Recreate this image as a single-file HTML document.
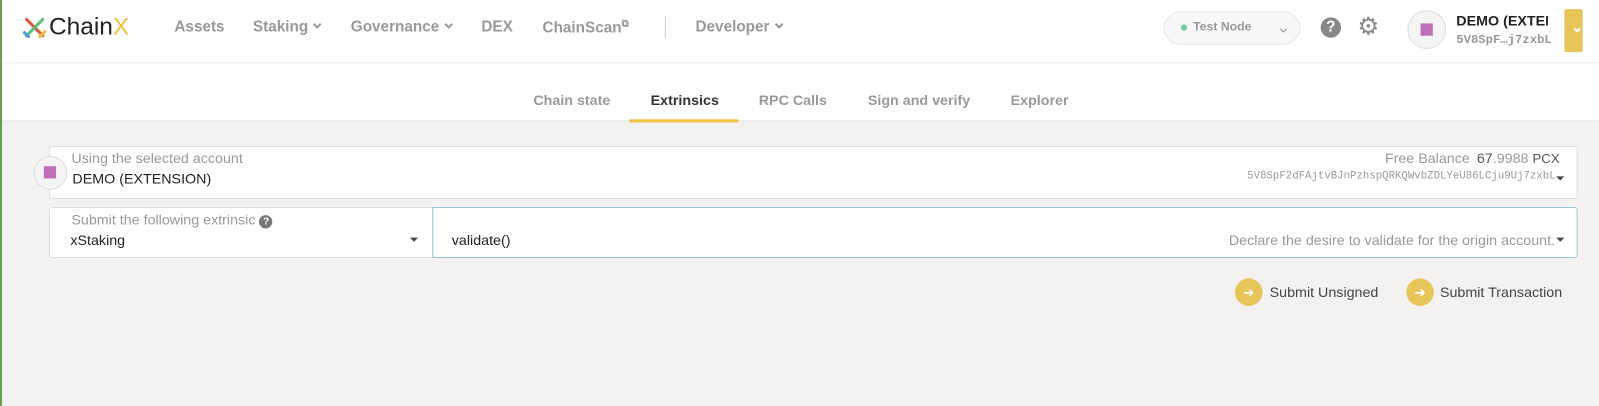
<!DOCTYPE html>
<html><head><meta charset="utf-8"><style>
*{box-sizing:border-box;margin:0;padding:0}
html,body{width:1599px;height:406px;overflow:hidden;background:#f3f2f0}
body{font-family:"Liberation Sans",sans-serif}
#w{position:absolute;left:0;top:0;width:1568px;height:398px;transform:scale(1.0198);transform-origin:0 0}
.a{position:absolute}
.nav{color:#999;font-weight:bold;font-size:15px;top:18px}
.tab{color:#999;font-weight:bold;font-size:14px;top:90px}
.chev{display:inline-block;width:6px;height:6px;border-right:2px solid #999;border-bottom:2px solid #999;transform:rotate(45deg);margin-left:6px;position:relative;top:-4px}
.caret{width:0;height:0;border-left:4px solid transparent;border-right:4px solid transparent;border-top:4px solid #444}
</style></head><body><div id="w">
<div class="a" style="left:0;top:0;width:2px;height:398px;background:#6a9f4a"></div>
<div class="a" style="left:2px;top:0;width:1566px;height:118px;background:#fff"></div>
<div class="a" style="left:2px;top:61px;width:1566px;height:1px;background:#eee"></div>
<div class="a" style="left:2px;top:118px;width:1566px;height:1px;background:#e4e4e4"></div>
<svg class="a" style="left:22px;top:16px" width="24" height="23" viewBox="0 0 24 23">
<path d="M4 3 L12 11 L20 19" stroke="#e05a3a" stroke-width="3" fill="none" stroke-linecap="round"/>
<path d="M20 3 L12 11 L4 19" stroke="#5fbf7a" stroke-width="3" fill="none" stroke-linecap="round"/>
<path d="M2 16 L6 20" stroke="#4a9ee0" stroke-width="3" stroke-linecap="round"/>
<path d="M17 20 L22 15" stroke="#f0c040" stroke-width="3" stroke-linecap="round"/>
</svg>
<div class="a" style="left:48px;top:13px;font-size:24px;color:#222">Chain<span style="color:#f0c040">X</span></div>
<div class="a nav" style="left:171px">Assets</div>
<div class="a nav" style="left:248px">Staking<span class="chev"></span></div>
<div class="a nav" style="left:344px">Governance<span class="chev"></span></div>
<div class="a nav" style="left:472px">DEX</div>
<div class="a nav" style="left:532px">ChainScan<sup style="font-size:10px">⧉</sup></div>
<div class="a" style="left:652px;top:16px;width:1px;height:22px;background:#ccc"></div>
<div class="a nav" style="left:682px">Developer<span class="chev"></span></div>
<div class="a" style="left:1141px;top:11px;width:134px;height:33px;border:1px solid #e8e8e8;border-radius:17px;background:#f8f8f8"></div>
<div class="a" style="left:1158px;top:24px;width:6px;height:6px;border-radius:50%;background:#6c9"></div>
<div class="a" style="left:1170px;top:19px;font-size:12px;color:#999;font-weight:bold">Test Node</div>
<div class="a" style="left:1250px;top:22px"><span class="chev" style="width:5px;height:5px;border-color:#999;border-width:1.5px"></span></div>
<div class="a" style="left:1295px;top:17px;width:20px;height:20px;border-radius:50%;background:#888;color:#fff;font-weight:bold;font-size:15px;text-align:center;line-height:20px">?</div>
<div class="a" style="left:1331px;top:13px;font-size:24px;color:#888;line-height:28px">⚙</div>
<div class="a" style="left:1380px;top:10px;width:38px;height:38px;border-radius:50%;background:#f4f4f4;border:1px solid #ddd"></div>
<div class="a" style="left:1393px;top:23px;width:12px;height:12px;background:#c070b8"></div>
<div class="a" style="left:1428px;top:12px;font-size:14px;font-weight:bold;color:#222;width:90px;overflow:hidden;white-space:nowrap">DEMO (EXTENSION)</div>
<div class="a" style="left:1428px;top:32px;font-size:12px;font-weight:bold;color:#999;font-family:'Liberation Mono',monospace">5V8SpF…j7zxbL</div>
<div class="a" style="left:1534px;top:9px;width:18px;height:42px;background:#e8c55a;border-radius:2px"></div>
<div class="a" style="left:1538px;top:22px"><span class="chev" style="border-color:#fff;width:5px;height:5px"></span></div>
<div class="a tab" style="left:523px">Chain state</div>
<div class="a tab" style="left:638px;color:#333">Extrinsics</div>
<div class="a tab" style="left:744px">RPC Calls</div>
<div class="a tab" style="left:851px">Sign and verify</div>
<div class="a tab" style="left:991px">Explorer</div>
<div class="a" style="left:617px;top:117px;width:107px;height:3px;background:#f0c040"></div>
<div class="a" style="left:48px;top:143px;width:1499px;height:52px;background:#fff;border:1px solid #ddd;border-radius:3px"></div>
<div class="a" style="left:33px;top:153px;width:33px;height:33px;border-radius:50%;background:#f4f4f4;border:1px solid #ddd"></div>
<div class="a" style="left:43px;top:163px;width:12px;height:12px;background:#c070b8"></div>
<div class="a" style="left:70px;top:147px;font-size:14px;color:#999">Using the selected account</div>
<div class="a" style="left:71px;top:167px;font-size:14px;color:#222">DEMO (EXTENSION)</div>
<div class="a" style="left:1358px;top:147px;font-size:14px;color:#999">Free Balance <span style="color:#555;margin-left:3px">67</span>.9988 <span style="color:#555;font-size:13px">PCX</span></div>
<div class="a" style="left:1223px;top:167px;font-size:10.5px;color:#999;font-family:'Liberation Mono',monospace">5V8SpF2dFAjtvBJnPzhspQRKQWvbZDLYeU86LCju9Uj7zxbL</div>
<div class="a caret" style="left:1526px;top:173px"></div>
<div class="a" style="left:48px;top:203px;width:377px;height:50px;background:#fff;border:1px solid #ddd;border-radius:3px 0 0 3px"></div>
<div class="a" style="left:424px;top:203px;width:1123px;height:50px;background:#fff;border:1px solid #9ec5d9;border-radius:0 3px 3px 0"></div>
<div class="a" style="left:70px;top:207px;font-size:14px;color:#999">Submit the following extrinsic <span style="display:inline-block;width:13px;height:13px;border-radius:50%;background:#777;color:#fff;font-size:10px;text-align:center;line-height:13px;font-weight:bold">?</span></div>
<div class="a" style="left:69px;top:227px;font-size:14px;color:#222">xStaking</div>
<div class="a caret" style="left:402px;top:233px"></div>
<div class="a" style="left:443px;top:227px;font-size:14px;color:#222">validate()</div>
<div class="a" style="left:1205px;top:227px;font-size:14px;color:#999">Declare the desire to validate for the origin account.</div>
<div class="a caret" style="left:1526px;top:233px"></div>
<div class="a" style="left:1211px;top:273px;width:27px;height:27px;border-radius:50%;background:#e8c55a;color:#fff;font-size:13px;text-align:center;line-height:27px">➔</div>
<div class="a" style="left:1245px;top:278px;font-size:14px;color:#444">Submit Unsigned</div>
<div class="a" style="left:1379px;top:273px;width:27px;height:27px;border-radius:50%;background:#e8c55a;color:#fff;font-size:13px;text-align:center;line-height:27px">➔</div>
<div class="a" style="left:1412px;top:278px;font-size:14px;color:#444">Submit Transaction</div>
</div></body></html>
